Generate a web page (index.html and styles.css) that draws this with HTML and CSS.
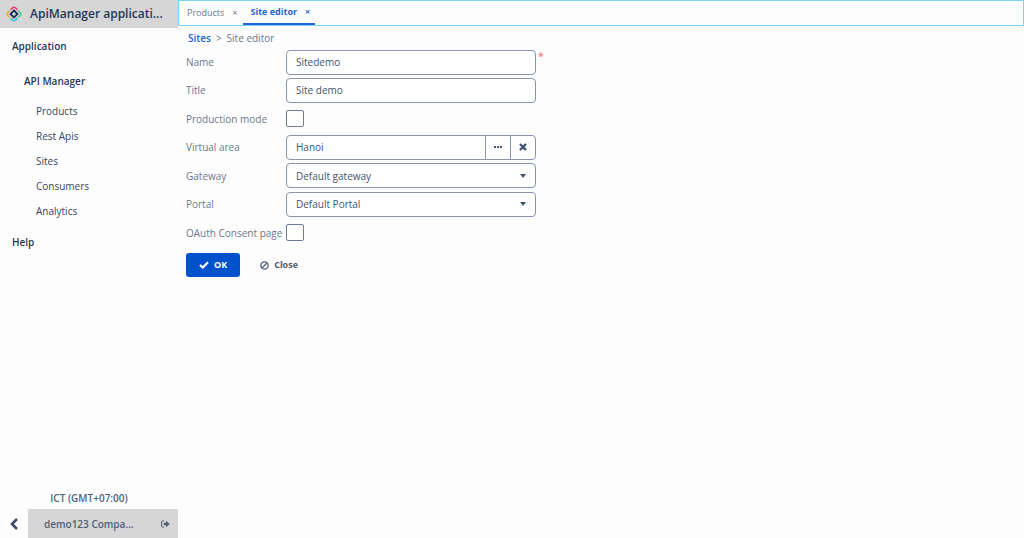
FILE: index.html
```html
<!DOCTYPE html>
<html lang="en">
<head>
    <meta charset="UTF-8">
    <meta name="viewport" content="width=device-width, initial-scale=1.0">
    <title>ApiManager application</title>
    <link rel="stylesheet" href="styles.css">
</head>
<body>
    <div class="sidebar">
        <div class="brand">
            <svg class="brand-logo" viewBox="0 0 16 16" fill="none" stroke-width="1.6">
                <path d="M4.500 3.800L6.500 1.800Q8 .6 9.500 1.800L11.500 3.800" stroke="#f0386b"/>
                <path d="M12.200 4.500L14.200 6.500Q15.400 8 14.200 9.500L12.200 11.500" stroke="#3ecf8e"/>
                <path d="M11.500 12.200L9.500 14.200Q8 15.400 6.500 14.200L4.500 12.200" stroke="#2bc4e8"/>
                <path d="M3.800 11.500L1.800 9.500Q.6 8 1.800 6.500L3.800 4.500" stroke="#f7a832"/>
                <path d="M8 4.500L11.500 8L8 11.500L4.500 8Z" stroke="#172b5c" stroke-width="1.8"/>
            </svg>
            <span class="brand-name">ApiManager applicati...</span>
        </div>
        <nav class="menu">
            <a class="menu-root" href="#">Application</a>
            <a class="menu-group" href="#">API Manager</a>
            <a class="menu-item" href="#">Products</a>
            <a class="menu-item" href="#">Rest Apis</a>
            <a class="menu-item" href="#">Sites</a>
            <a class="menu-item" href="#">Consumers</a>
            <a class="menu-item" href="#">Analytics</a>
            <a class="menu-root menu-help" href="#">Help</a>
        </nav>
        <div class="timezone">ICT (GMT+07:00)</div>
        <div class="userbar">
            <button class="collapse" type="button" aria-label="Collapse menu">
                <svg width="10" height="12" viewBox="0 0 10 12" fill="none" stroke="#3b4a6b" stroke-width="2.600"><path d="M8 1L3 6L8 11"/></svg>
            </button>
            <div class="user">
                <span class="user-name">demo123 Compa...</span>
                <button class="logout" type="button" aria-label="Log out">
                    <svg width="9" height="8" viewBox="0 0 9 8"><path d="M3 .9H1.500Q.6.9.6 1.800V6.200Q.6 7.100 1.500 7.100H3" fill="none" stroke="#505f79"/><path d="M2.800 2.700H5V.8L8.800 4L5 7.200V5.300H2.800Z" fill="#505f79"/></svg>
                </button>
            </div>
        </div>
    </div>
    <div class="main">
        <div class="tabs">
            <div class="tab">
                <a href="#">Products</a>
                <button class="tab-close" type="button" aria-label="Close Products">×</button>
            </div>
            <div class="tab tab-active">
                <a href="#">Site editor</a>
                <button class="tab-close" type="button" aria-label="Close Site editor">×</button>
            </div>
        </div>
        <div class="breadcrumbs">
            <a href="#">Sites</a>
            <span>&gt;</span>
            <span>Site editor</span>
        </div>
        <form class="editor">
            <div class="form-row">
                <label for="name">Name</label>
                <input class="form-control" type="text" id="name" value="Sitedemo">
                <span class="required">*</span>
            </div>
            <div class="form-row">
                <label for="title">Title</label>
                <input class="form-control" type="text" id="title" value="Site demo">
            </div>
            <div class="form-row form-row-tall">
                <label for="production">Production mode</label>
                <input class="form-check" type="checkbox" id="production">
            </div>
            <div class="form-row">
                <label for="area">Virtual area</label>
                <div class="form-control picker">
                    <input type="text" id="area" value="Hanoi">
                    <button type="button" aria-label="Select area">
                        <svg width="8" height="2" viewBox="0 0 8 2" fill="#42526e"><rect width="2" height="2"/><rect x="3" width="2" height="2"/><rect x="6" width="2" height="2"/></svg>
                    </button>
                    <button type="button" aria-label="Clear area">
                        <svg width="8" height="8" viewBox="0 0 8 8" stroke="#42526e" stroke-width="2.400"><path d="M1 1L7 7M7 1L1 7"/></svg>
                    </button>
                </div>
            </div>
            <div class="form-row form-row-tall">
                <label for="gateway">Gateway</label>
                <div class="dropdown">
                    <select class="form-control" id="gateway"><option>Default gateway</option></select>
                </div>
            </div>
            <div class="form-row">
                <label for="portal">Portal</label>
                <div class="dropdown">
                    <select class="form-control" id="portal"><option>Default Portal</option></select>
                </div>
            </div>
            <div class="form-row form-row-tall">
                <label for="oauth">OAuth Consent page</label>
                <input class="form-check" type="checkbox" id="oauth">
            </div>
            <div class="actions">
                <button class="btn btn-primary" type="button">
                    <svg width="10" height="8" viewBox="0 0 10 8" fill="none" stroke="#fff" stroke-width="2.200"><path d="M1 4L3.800 6.500L9 1.300"/></svg>
                    OK
                </button>
                <button class="btn" type="button">
                    <svg width="9" height="9" viewBox="0 0 9 9" fill="none" stroke="#505f79" stroke-width="1.300"><circle cx="4.500" cy="4.500" r="3.700"/><path d="M2 7L7 2"/></svg>
                    Close
                </button>
            </div>
        </form>
    </div>
</body>
</html>
```
FILE: styles.css
```css
* {
	box-sizing: border-box;
}

body {
	display: flex;
	min-height: 100vh;
	margin: 0;
	background: #fdfdfd;
	color: #6b778c;
	font: 10px/16px "Open Sans", sans-serif;
}

a {
	color: inherit;
	text-decoration: none;
}

button {
	padding: 0;
	border: 0;
	background: none;
	color: inherit;
	font: inherit;
	cursor: pointer;
}

svg {
	display: block;
	flex: none;
}

/* sidebar */
.sidebar {
	display: flex;
	flex-direction: column;
	flex: none;
	width: 178px;
	color: #253858;
}

.brand {
	display: flex;
	align-items: center;
	gap: 8px;
	height: 28px;
	padding-left: 6px;
	background: #d6d6d6;
}

.brand-logo {
	width: 16px;
	height: 16px;
}

.brand-name {
	font-size: 12px;
	line-height: 18px;
	font-weight: 600;
	white-space: nowrap;
}

.menu {
	display: flex;
	flex-direction: column;
	padding-top: 10px;
}

.menu a {
	padding-left: 36px;
	line-height: 25px;
	color: #344563;
}

.menu .menu-root {
	padding-left: 12px;
	line-height: 16px;
	font-weight: 600;
	color: #253858;
}

.menu .menu-group {
	padding: 15px 0 5px 24px;
	font-weight: 600;
	color: #253858;
}

.menu .menu-help {
	padding-top: 10px;
}

.timezone {
	margin-top: auto;
	padding-bottom: 3px;
	text-align: center;
	font-weight: 600;
	color: #505f79;
}

.userbar {
	display: flex;
	height: 29px;
	color: #505f79;
}

.collapse {
	display: flex;
	align-items: center;
	justify-content: center;
	width: 28px;
}

.user {
	display: flex;
	flex: 1;
	align-items: center;
	justify-content: space-between;
	padding: 0 8px 0 16px;
	background: #d6d6d6;
}

.user-name {
	font-weight: 600;
	white-space: nowrap;
}

/* tabs */
.main {
	flex: 1;
	min-width: 0;
}

.tabs {
	display: flex;
	height: 26px;
	border: 1px solid #79d2f8;
	font-size: 9px;
}

.tab {
	display: flex;
	align-items: center;
	gap: 8px;
	padding: 0 5px 0 8px;
}

.tab-active {
	border-bottom: 2px solid #2264d1;
	color: #2264d1;
	font-weight: 700;
}

.breadcrumbs {
	display: flex;
	gap: 5px;
	padding: 4px 10px 2px;
}

.breadcrumbs a {
	color: #2264d1;
	font-weight: 600;
}

/* form */
.editor {
	padding-left: 8px;
}

.form-row {
	display: flex;
	align-items: center;
	height: 28px;
}

.form-row-tall {
	height: 29px;
}

.form-row label {
	flex: none;
	width: 100px;
	white-space: nowrap;
}

.form-control {
	width: 250px;
	height: 25px;
	padding: 0 9px;
	border: 1px solid #8993b0;
	border-radius: 4px;
	background: #fff;
	color: #42526e;
	font: inherit;
}

.required {
	align-self: flex-start;
	padding-left: 2px;
	color: #ff5c5c;
}

.form-check {
	appearance: none;
	width: 18px;
	height: 17px;
	margin: 0;
	border: 1px solid #6c7a9c;
	border-radius: 2px;
	background: #fff;
}

.picker {
	display: flex;
	padding-right: 0;
}

.picker input {
	flex: 1;
	min-width: 0;
	padding: 0;
	border: 0;
	background: none;
	color: inherit;
	font: inherit;
}

.picker button {
	display: flex;
	align-items: center;
	justify-content: center;
	width: 25px;
	border-left: 1px solid #8993b0;
}

.dropdown {
	display: grid;
	align-items: center;
}

.dropdown select {
	grid-area: 1 / 1;
	appearance: none;
}

.dropdown::after {
	content: "";
	grid-area: 1 / 1;
	justify-self: end;
	margin-right: 10px;
	border: 3px solid transparent;
	border-top: 4px solid #42526e;
	border-bottom: 0;
	pointer-events: none;
}

.actions {
	display: flex;
	gap: 8px;
	padding-top: 6px;
}

.btn {
	display: flex;
	align-items: center;
	gap: 5px;
	height: 24px;
	padding: 0 12px;
	border-radius: 3px;
	color: #505f79;
	font-size: 9px;
	font-weight: 700;
}

.btn-primary {
	padding: 0 13px;
	background: #0052cc;
	color: #fff;
}
```
